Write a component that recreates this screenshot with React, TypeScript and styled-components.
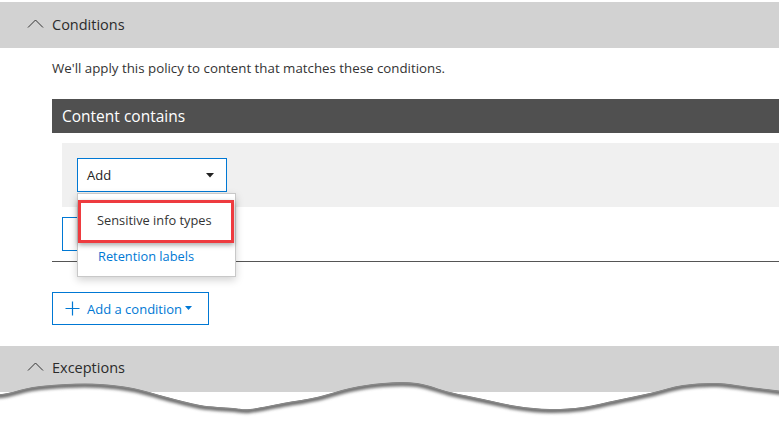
import styled, { createGlobalStyle } from "styled-components"

const GlobalStyle = createGlobalStyle`
  html, body {
    margin: 0;
    padding: 0;
    background: #fff;
  }
  body {
    font-family: "Open Sans", "Noto Sans", sans-serif;
    color: #333;
  }
`

const BLUE = "#0078d4"

// points of the torn paper edge, relative to the overlay top (y = 378)
const wavePoints: [number, number][] = [
  [-10, 17], [8, 15], [33, 9], [67, 6], [100, 6], [133, 10], [167, 19], [200, 27],
  [233, 30], [250, 31], [283, 25], [317, 19], [350, 10], [383, 5], [417, 5],
  [450, 14], [483, 21], [517, 28], [550, 31], [583, 29], [617, 22], [650, 15],
  [683, 7], [717, 5], [750, 9], [790, 14],
]

function smoothPath(pts: [number, number][]) {
  let d = `M${pts[0][0]},${pts[0][1]}`
  for (let i = 0; i < pts.length - 1; i++) {
    const p0 = pts[i - 1] || pts[i]
    const p1 = pts[i]
    const p2 = pts[i + 1]
    const p3 = pts[i + 2] || p2
    const c1x = p1[0] + (p2[0] - p0[0]) / 6
    const c1y = p1[1] + (p2[1] - p0[1]) / 6
    const c2x = p2[0] - (p3[0] - p1[0]) / 6
    const c2y = p2[1] - (p3[1] - p1[1]) / 6
    d += ` C${c1x},${c1y} ${c2x},${c2y} ${p2[0]},${p2[1]}`
  }
  return d
}

const waveLine = smoothPath(wavePoints)
const waveFill = `${waveLine} L790,60 L-10,60 Z`

function ChevronUp() {
  return (
    <svg width="17" height="9" viewBox="0 0 17 9">
      <polyline points="1,8.5 8.5,1 16,8.5" fill="none" stroke="#333" strokeWidth="1" />
    </svg>
  )
}

function Caret({ color = "#222", size = 8 }: { color?: string; size?: number }) {
  return (
    <svg width={size} height={size / 2 + 1} viewBox="0 0 8 5">
      <polygon points="0,0 8,0 4,4.5" fill={color} />
    </svg>
  )
}

function PlusIcon() {
  return (
    <svg width="15" height="15" viewBox="0 0 15 15">
      <path d="M7.5 0.5 V14.5 M0.5 7.5 H14.5" stroke={BLUE} strokeWidth="1.2" fill="none" />
    </svg>
  )
}

function TornEdge() {
  return (
    <TornSvg width="779" height="54" viewBox="0 0 779 54">
      <defs>
        <clipPath id="below">
          <path d={waveFill} />
        </clipPath>
        <filter id="soft" x="-5%" y="-50%" width="110%" height="200%">
          <feGaussianBlur stdDeviation="1.8" />
        </filter>
      </defs>
      <path d={waveFill} fill="#fff" />
      <g clipPath="url(#below)">
        <path d={waveLine} transform="translate(0,1.5)" stroke="#6e6e6e" strokeWidth="5" fill="none" filter="url(#soft)" />
        <path d={waveLine} transform="translate(0,0.5)" stroke="#888" strokeWidth="1.5" fill="none" />
      </g>
    </TornSvg>
  )
}

export default function App() {
  return (
    <>
      <GlobalStyle />
      <Page>
        <SectionHeader>
          <ChevronUp />
          <span>Conditions</span>
        </SectionHeader>
        <SectionBody>
          <Description>We'll apply this policy to content that matches these conditions.</Description>
          <ConditionBar>Content contains</ConditionBar>
          <AddArea>
            <Select>
              <span>Add</span>
              <Caret />
            </Select>
            <Menu>
              <MenuItem $highlight>Sensitive info types</MenuItem>
              <MenuItem $link>Retention labels</MenuItem>
            </Menu>
          </AddArea>
          <GhostButton aria-label="Add group" />
          <Divider />
          <AddConditionButton>
            <PlusIcon />
            <span>Add a condition</span>
            <Caret color={BLUE} size={7} />
          </AddConditionButton>
        </SectionBody>
        <SectionHeader $bottom>
          <ChevronUp />
          <span>Exceptions</span>
        </SectionHeader>
        <TornEdge />
      </Page>
    </>
  )
}

const Page = styled.div`
  position: relative;
  width: 779px;
  height: 432px;
  padding-top: 2px;
  box-sizing: border-box;
  overflow: hidden;
`

const SectionHeader = styled.div<{ $bottom?: boolean }>`
  display: flex;
  align-items: center;
  gap: 8px;
  height: 46px;
  padding-left: 27px;
  padding-bottom: ${({ $bottom }) => ($bottom ? "3px" : "1px")};
  box-sizing: border-box;
  background: #d2d2d2;
  font-size: 14.5px;
  color: #2b2b2b;

  svg {
    margin-top: -3px;
  }
`

const SectionBody = styled.div`
  padding: 0 0 21px 52px;
  display: flex;
  flex-direction: column;
  align-items: flex-start;
`

const Description = styled.p`
  margin: 11px 0 0;
  font-size: 13.3px;
  line-height: 18px;
  color: #333;
`

const ConditionBar = styled.div`
  align-self: stretch;
  margin-top: 22px;
  height: 34px;
  padding-left: 10px;
  display: flex;
  align-items: center;
  background: #505050;
  color: #fff;
  font-size: 15.5px;
`

const AddArea = styled.div`
  position: relative;
  align-self: stretch;
  margin: 10px 0 0 10px;
  height: 64px;
  padding: 15px;
  box-sizing: border-box;
  background: #f0f0f0;
`

const Select = styled.div`
  width: 150px;
  height: 34px;
  box-sizing: border-box;
  border: 1px solid ${BLUE};
  background: #fff;
  display: flex;
  align-items: center;
  justify-content: space-between;
  padding: 0 12px 0 9px;
  font-size: 13px;
  color: #222;
`

const Menu = styled.div`
  position: absolute;
  top: 50px;
  left: 15px;
  z-index: 5;
  width: 159px;
  height: 84px;
  box-sizing: border-box;
  padding-top: 6px;
  background: #fff;
  border: 1px solid #c8c8c8;
  box-shadow: 0 3px 8px rgba(0, 0, 0, 0.18);
  display: flex;
  flex-direction: column;
`

const MenuItem = styled.div<{ $highlight?: boolean; $link?: boolean }>`
  height: ${({ $highlight }) => ($highlight ? "43px" : "26px")};
  display: flex;
  align-items: center;
  padding-left: ${({ $highlight }) => ($highlight ? "16px" : "20px")};
  padding-bottom: ${({ $highlight }) => ($highlight ? "3px" : "0")};
  margin: ${({ $highlight }) => ($highlight ? "0 1px 0 0" : "0")};
  box-sizing: border-box;
  font-size: 12.8px;
  color: ${({ $link }) => ($link ? BLUE : "#333")};
  border: ${({ $highlight }) => ($highlight ? "3px solid #ee3b3f" : "none")};
  box-shadow: ${({ $highlight }) => ($highlight ? "0 2px 5px rgba(0,0,0,0.35)" : "none")};
`

const GhostButton = styled.div`
  margin: 10px 0 0 10px;
  width: 120px;
  height: 34px;
  box-sizing: border-box;
  border: 1px solid ${BLUE};
`

const Divider = styled.div`
  align-self: stretch;
  margin-top: 10px;
  height: 1px;
  background: #555;
`

const AddConditionButton = styled.div`
  margin-top: 30px;
  width: 157px;
  height: 33px;
  box-sizing: border-box;
  border: 1px solid ${BLUE};
  display: flex;
  align-items: center;
  padding-left: 12px;
  gap: 7px;
  color: ${BLUE};
  font-size: 13px;

  span {
    margin-right: -4px;
  }
`

const TornSvg = styled.svg`
  position: absolute;
  left: 0;
  top: 378px;
  display: block;
`
